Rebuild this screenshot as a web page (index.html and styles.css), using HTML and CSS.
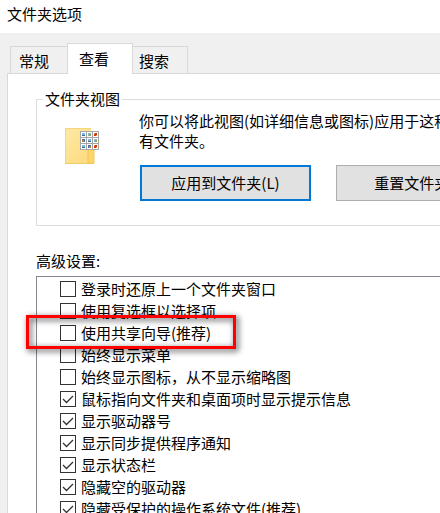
FILE: index.html
```html
<!DOCTYPE html>
<html lang="zh-CN">
<head>
  <meta charset="UTF-8">
  <meta name="viewport" content="width=device-width, initial-scale=1.0">
  <link rel="stylesheet" href="styles.css">
  <title>文件夹选项</title>
</head>
<body>
  <div class="dialog">
    <h1 class="title">文件夹选项</h1>

    <div class="tabs" role="tablist">
      <button class="tab" type="button" role="tab" aria-selected="false">常规</button>
      <button class="tab active" type="button" role="tab" aria-selected="true">查看</button>
      <button class="tab" type="button" role="tab" aria-selected="false">搜索</button>
    </div>

    <div class="panel" role="tabpanel">
      <fieldset class="views">
        <legend>文件夹视图</legend>
        <svg class="folder" width="36" height="38" viewBox="0 0 36 38" aria-hidden="true">
          <defs>
            <linearGradient id="back" x1="0" y1="0" x2="1" y2="1">
              <stop offset="0" stop-color="#fee9a6"/>
              <stop offset="1" stop-color="#fcd978"/>
            </linearGradient>
          </defs>
          <path d="M1 1h26v18l3 3v15H1z" fill="url(#back)"/>
          <path d="M1 1h26v1H1zM1 1h1v36H1z" fill="#f5d67a"/>
          <path d="M1 36h29v1H1z" fill="#efcb67"/>
          <path d="M24 36V22q0-3 3-3t3 3v14z" fill="#fdd569" stroke="#f0c75b"/>
          <path d="M16 4h19v19H16z" fill="#a6a6a6"/>
          <path d="M17 5h5v5h-5zM23 5h5v5h-5zM29 5h5v5h-5zM17 11h5v5h-5zM23 11h5v5h-5zM29 11h5v5h-5zM17 17h5v5h-5zM23 17h5v5h-5zM29 17h5v5h-5z" fill="#fff"/>
          <path d="M18 6h3v2h-3zM24 12h3v2h-3zM18 18h3v2h-3z" fill="#7fb5e5"/>
          <path d="M18 8h3v1h-3zM24 14h3v1h-3zM18 20h3v1h-3z" fill="#356b84"/>
          <path d="M24 6h3v3h-3zM30 12h3v3h-3z" fill="#8bb6c4"/>
          <path d="M25 7h2v2h-2zM31 13h2v2h-2z" fill="#91a553"/>
          <path d="M30 6h3v3h-3zM30 18h3v3h-3z" fill="#c9381d"/>
          <path d="M30 6h1v1h-1zM32 8h1v1h-1zM30 18h1v1h-1zM32 20h1v1h-1z" fill="#e8a13b"/>
          <path d="M18 12h3v3h-3zM24 18h3v3h-3z" fill="#4b69a7"/>
          <path d="M18 13h2v2h-2zM25 19h2v2h-2z" fill="#b98a35"/>
        </svg>
        <div class="views-body">
          <p>你可以将此视图(如详细信息或图标)应用于这种类型的所有文件夹。</p>
          <div class="buttons">
            <button class="btn default" type="button">应用到文件夹(L)</button>
            <button class="btn" type="button">重置文件夹(R)</button>
          </div>
        </div>
      </fieldset>

      <h2 class="label" id="advanced">高级设置:</h2>
      <ul class="settings" aria-labelledby="advanced">
        <li><label><input type="checkbox">登录时还原上一个文件夹窗口</label></li>
        <li><label><input type="checkbox">使用复选框以选择项</label></li>
        <li class="marked"><label><input type="checkbox">使用共享向导(推荐)</label></li>
        <li><label><input type="checkbox">始终显示菜单</label></li>
        <li><label><input type="checkbox">始终显示图标，从不显示缩略图</label></li>
        <li><label><input type="checkbox" checked>鼠标指向文件夹和桌面项时显示提示信息</label></li>
        <li><label><input type="checkbox" checked>显示驱动器号</label></li>
        <li><label><input type="checkbox" checked>显示同步提供程序通知</label></li>
        <li><label><input type="checkbox" checked>显示状态栏</label></li>
        <li><label><input type="checkbox" checked>隐藏空的驱动器</label></li>
        <li><label><input type="checkbox" checked>隐藏受保护的操作系统文件(推荐)</label></li>
      </ul>
    </div>
  </div>
</body>
</html>
```
FILE: styles.css
```css
*,
*::after {
  box-sizing: border-box;
}

body {
  margin: 0;
  height: 100vh;
  overflow: hidden;
  background-color: #f0f0f0;
  color: #000;
  font: 15px/20px "Noto Sans CJK SC", sans-serif;
}

button {
  font: inherit;
  color: inherit;
}

/* the dialog keeps its width and runs off a narrow window */
.dialog {
  min-width: 552px;
}

.title {
  margin: 0;
  padding: 4px 7px 9px;
  background-color: #fff;
  font-size: 15px;
  font-weight: normal;
}

.tabs {
  display: flex;
  align-items: flex-end;
  padding: 10px 10px 0;
}

.tab {
  height: 27px;
  padding: 2px 18px 0 8px;
  border: 1px solid #d9d9d9;
  border-bottom: 0;
  background-color: #f0f0f0;
}

.tab:first-child {
  border-right: 0;
}

.tab:last-child {
  padding-left: 6px;
  border-left: 0;
}

.tab.active {
  position: relative;
  height: 31px;
  margin-bottom: -1px;
  padding: 0 23px 0 11px;
  background-color: #fff;
}

.panel {
  margin: 0 7px;
  padding: 15px 22px 0 28px;
  border: 1px solid #d9d9d9;
  background-color: #fff;
}

.views {
  display: flex;
  gap: 39px;
  margin: 0;
  padding: 2px 10px 24px 27px;
  border: 1px solid #dcdcdc;
}

.views legend {
  margin-left: -21px;
  padding: 0 2px;
}

.folder {
  flex: none;
  margin-top: 16px;
}

.views p {
  margin: 0 0 14px;
}

.buttons {
  display: flex;
  gap: 25px;
  padding-left: 1px;
}

.btn {
  width: 171px;
  height: 36px;
  padding: 0;
  border: 1px solid #adadad;
  background-color: #e1e1e1;
}

.btn.default {
  border: 2px solid #0078d7;
}

.label {
  margin: 25px 0 5px;
  font-size: 15px;
  font-weight: normal;
}

.settings {
  margin: 0;
  padding: 1px 0 0 23px;
  border: 1px solid #828790;
  list-style: none;
}

.settings li {
  height: 22px;
}

.settings label {
  display: flex;
  align-items: center;
  gap: 5px;
  height: 22px;
}

.settings input {
  appearance: none;
  flex: none;
  width: 16px;
  height: 16px;
  margin: 0;
  border: 1px solid #333;
  background-color: #fff;
}

.settings input:checked {
  background-image: url("data:image/svg+xml,%3Csvg xmlns='http://www.w3.org/2000/svg' viewBox='0 0 14 14'%3E%3Cpath d='M2 7l3.5 3.5L12 4' fill='none' stroke='%23333' stroke-width='1.3'/%3E%3C/svg%3E");
}

/* red frame drawn around one setting */
.marked {
  position: relative;
}

.marked::after {
  content: "";
  position: absolute;
  top: -7px;
  left: -34px;
  width: 210px;
  height: 34px;
  border: 3px solid #f00;
  filter: drop-shadow(2px 2px 3px rgba(0, 0, 0, 0.8));
  pointer-events: none;
}
```
